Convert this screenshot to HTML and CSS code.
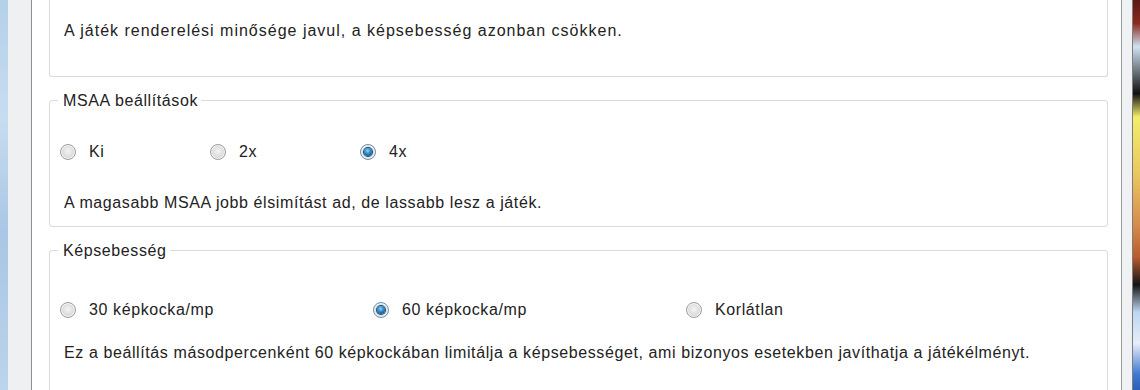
FILE: index.html
```html
<!DOCTYPE html>
<html lang="hu">
<head>
<meta charset="UTF-8">
<meta name="viewport" content="width=device-width, initial-scale=1.0">
<title>Grafikai beállítások</title>
<link rel="stylesheet" href="styles.css">
</head>
<body>
  <div class="window">
    <div class="frame-glass"></div>
    <div class="frame-side"></div>

    <div class="content">
      <div class="group group-cut">
        <p class="note">A játék renderelési minősége javul, a képsebesség azonban csökken.</p>
      </div>

      <fieldset class="group group-msaa">
        <legend>MSAA beállítások</legend>
        <div class="options options-narrow">
          <label class="option"><span class="radio"></span>Ki</label>
          <label class="option"><span class="radio"></span>2x</label>
          <label class="option"><span class="radio checked"></span>4x</label>
        </div>
        <p class="note">A magasabb MSAA jobb élsimítást ad, de lassabb lesz a játék.</p>
      </fieldset>

      <fieldset class="group group-fps">
        <legend>Képsebesség</legend>
        <div class="options options-wide">
          <label class="option"><span class="radio"></span>30 képkocka/mp</label>
          <label class="option"><span class="radio checked"></span>60 képkocka/mp</label>
          <label class="option"><span class="radio"></span>Korlátlan</label>
        </div>
        <p class="note">Ez a beállítás másodpercenként 60 képkockában limitálja a képsebességet, ami bizonyos esetekben javíthatja a játékélményt.</p>
      </fieldset>
    </div>

    <div class="frame-right"></div>
    <div class="desktop"></div>
  </div>
</body>
</html>
```

FILE: styles.css
```css
html, body {
  margin: 0;
  padding: 0;
  height: 100%;
  overflow: hidden;
}

body {
  font-family: 'Liberation Sans', Arial, sans-serif;
  font-size: 16px;
  letter-spacing: 0.6px;
  color: #222;
  background: #fff;
}

.window {
  display: flex;
  height: 390px;
}

.frame-glass {
  width: 8px;
  background: linear-gradient(180deg, #b4d0ea 0%, #c8dcf0 30%, #a9c6e4 60%, #bcd4ec 100%);
}

.frame-side {
  width: 23px;
  background: #eef0f2;
  border-right: 1px solid #8e8f91;
}

.content {
  flex: 1;
  padding: 0 13px 0 17px;
  background: #fff;
  border-right: 1px solid #9a9b9d;
}

.frame-right {
  width: 10px;
  background: #f0f1f3;
  border-right: 1px solid #7c7d80;
}

.desktop {
  width: 7px;
  background: linear-gradient(180deg,
    #5a1a14 0%, #8a2a1e 6%, #cfe2f2 12%, #111 24%, #f2ee6a 30%,
    #e9c660 45%, #d58a4c 58%, #b85a2e 66%, #141414 73%, #bcd6f0 80%,
    #e6eef8 88%, #3e78d0 96%, #2b5eb8 100%);
}

/* group boxes */
.group {
  margin: 0;
  border: 1px solid #d9dadc;
  border-radius: 3px;
  min-width: 0;
}

.group-cut {
  border-top: none;
  border-radius: 0 0 3px 3px;
  height: 77px;
  box-sizing: border-box;
  padding: 22px 0 0 14px;
}

.group-cut .note {
  letter-spacing: 1px;
}

fieldset.group {
  padding: 0 0 0 10px;
}

legend {
  margin-left: -2px;
  padding: 0 3px 0 5px;
  line-height: 17px;
}

.group-msaa {
  margin-top: 15px;
  height: 135px;
  box-sizing: border-box;
}

.group-fps {
  margin-top: 15px;
  height: 160px;
  box-sizing: border-box;
}

.note {
  margin: 0;
  line-height: 18px;
}

fieldset .note {
  padding-left: 4px;
}

.options {
  display: grid;
  align-items: center;
}

.options-narrow {
  grid-template-columns: 150px 150px 150px;
  padding: 34px 0 33px;
}

.options-wide {
  grid-template-columns: 313px 313px 313px;
  padding: 42px 0 25px;
}

.option {
  display: flex;
  align-items: center;
  gap: 13px;
  height: 18px;
}

/* Aero style radio button */
.radio {
  width: 16px;
  height: 16px;
  flex: none;
  border-radius: 50%;
  box-sizing: border-box;
  border: 1px solid #9b9fa3;
  background: radial-gradient(circle at 50% 45%, #f4f4f4 0%, #dcdcdc 55%, #c9cacb 100%);
  box-shadow: inset 0 0 0 1px #f6f6f6;
  display: flex;
  align-items: center;
  justify-content: center;
}

.radio.checked {
  border-color: #6b8fae;
}

.radio.checked::after {
  content: "";
  width: 8px;
  height: 8px;
  border-radius: 50%;
  background: radial-gradient(circle at 45% 35%, #8fd6f6 0%, #2c86c0 45%, #0d3f6e 100%);
  box-shadow: 0 0 0 1px #1b4e78;
}
```
